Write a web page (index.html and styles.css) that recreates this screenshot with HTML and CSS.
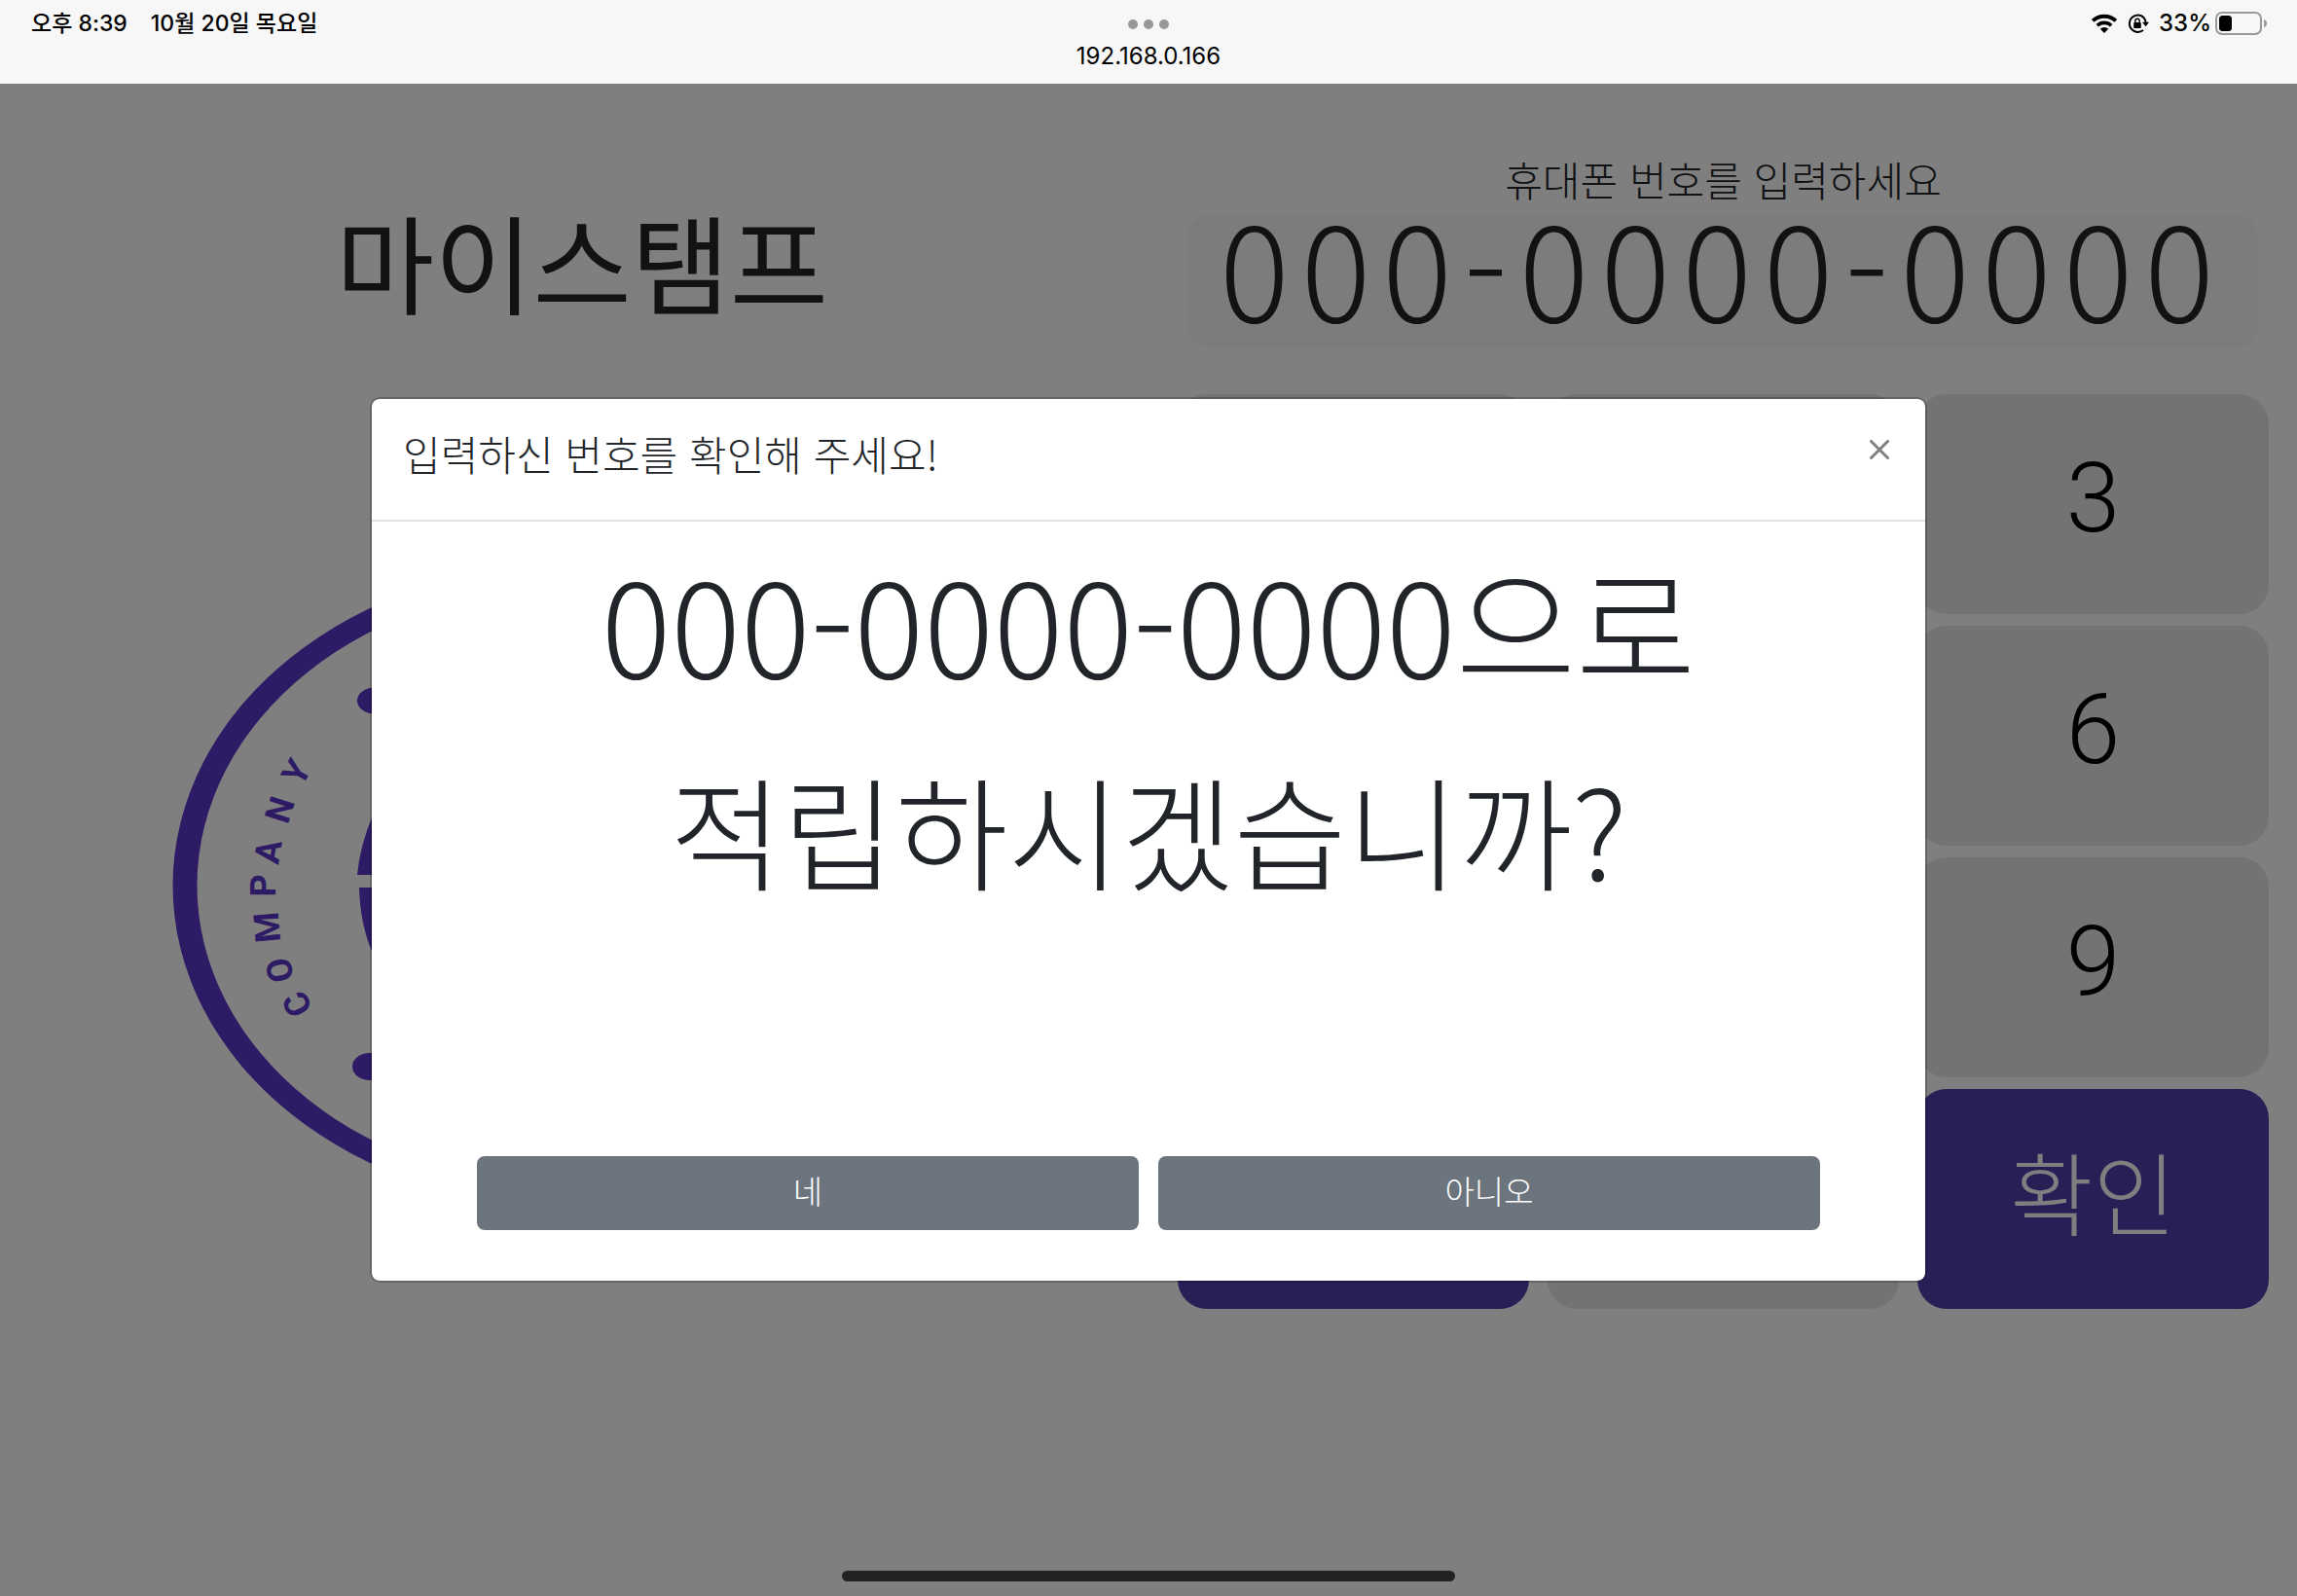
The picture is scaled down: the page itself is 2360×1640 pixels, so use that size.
FILE: index.html
```html
<!DOCTYPE html>
<html lang="ko">
<head>
<meta charset="utf-8">
<meta name="viewport" content="width=device-width, initial-scale=1">
<title>마이스탬프</title>
<link rel="stylesheet" href="styles.css">
</head>
<body>
<header class="status">
  <div class="status-left"><span>오후 8:39</span><span>10월 20일 목요일</span></div>
  <div class="status-center">
    <div class="dots"><i></i><i></i><i></i></div>
    <span class="address">192.168.0.166</span>
  </div>
  <div class="status-right">
    <svg class="wifi" viewBox="0 0 28 20" width="28" height="20" aria-hidden="true">
      <path d="M2.200 7.400A17 17 0 0 1 25.800 7.400" fill="none" stroke="#000" stroke-width="4"/>
      <path d="M6.800 12.200A10.500 10.500 0 0 1 21.200 12.200" fill="none" stroke="#000" stroke-width="3.600"/>
      <path d="M14 20L9.800 15.800A6 6 0 0 1 18.200 15.800Z"/>
    </svg>
    <svg class="lock" viewBox="0 0 22 20" width="22" height="20" aria-hidden="true">
      <path d="M16.800 4.200A8.700 8.700 0 1 0 16 17" fill="none" stroke="#000" stroke-width="2"/>
      <path d="M16 3.500A8.700 8.700 0 0 1 18.600 9.500" fill="none" stroke="#000" stroke-width="2"/>
      <path d="M15 8.800H22L18.500 13.200Z"/>
      <rect x="6.200" y="9" width="7.600" height="6" rx="1"/>
      <path d="M7.800 9.500V7.500A2.200 2.200 0 0 1 12.200 7.500V9.500" fill="none" stroke="#000" stroke-width="1.400"/>
    </svg>
    <span>33%</span>
    <svg class="battery" viewBox="0 0 54 24" width="54" height="24" aria-hidden="true">
      <rect x="1" y="1" width="46" height="22" rx="6" fill="none" stroke="#999" stroke-width="2"/>
      <rect x="4" y="4" width="13" height="16" rx="3.500"/>
      <path d="M50 8Q53 9 53 12T50 16Z" fill="#999"/>
    </svg>
  </div>
</header>

<div class="stage">
  <main class="app">
    <section class="brand">
      <h1 class="brand-name">마이스탬프</h1>
      <svg class="stamp" viewBox="0 0 826 664" width="826" height="664" role="img" aria-label="COMPANY">
        <g transform="translate(-177 -578)" fill="#5a36cc">
          <path fill-rule="evenodd" d="M177.500 910A412.500 331 0 1 1 1002.500 910A412.500 331 0 1 1 177.500 910ZM202.500 910A387.500 310 0 1 0 977.500 910A387.500 310 0 1 0 202.500 910Z"/>
          <ellipse cx="385" cy="720" rx="18" ry="13.500"/>
          <ellipse cx="380" cy="1096" rx="18" ry="14"/>
          <path d="M367 899Q370 868 383 838H400V899Z"/>
          <path d="M369 912Q370 950 383 980H400V912Z"/>
          <g class="stamp-text">
            <text transform="translate(305 1032) rotate(-116)" y="13">C</text>
            <text transform="translate(287 997) rotate(-102)" y="13">O</text>
            <text transform="translate(274 953) rotate(-95)" y="13">M</text>
            <text transform="translate(270 910) rotate(-90)" y="13">P</text>
            <text transform="translate(275 875) rotate(-81)" y="13">A</text>
            <text transform="translate(287 832) rotate(-72)" y="13">N</text>
            <text transform="translate(304 793) rotate(-60)" y="13">Y</text>
          </g>
        </g>
      </svg>
    </section>
    <section class="entry">
      <label class="entry-label" for="phone">휴대폰 번호를 입력하세요</label>
      <input class="entry-field" id="phone" type="text" value="000-0000-0000" readonly>
      <div class="keypad">
        <button class="key" aria-label="1"></button>
        <button class="key" aria-label="2"></button>
        <button class="key">3</button>
        <button class="key" aria-label="4"></button>
        <button class="key" aria-label="5"></button>
        <button class="key">6</button>
        <button class="key" aria-label="7"></button>
        <button class="key" aria-label="8"></button>
        <button class="key">9</button>
        <button class="key key-action" aria-label="취소"></button>
        <button class="key" aria-label="0"></button>
        <button class="key key-action">확인</button>
      </div>
    </section>
  </main>

  <div class="backdrop">
    <div class="modal" role="dialog" aria-labelledby="modal-title">
      <div class="modal-header">
        <h2 class="modal-title" id="modal-title">입력하신 번호를 확인해 주세요!</h2>
        <button class="close" aria-label="닫기">
          <svg viewBox="0 0 20 20" width="20" height="20" aria-hidden="true"><path d="M1.500 1.500L18.500 18.500M18.500 1.500L1.500 18.500" stroke="#7f7f7f" stroke-width="3" stroke-linecap="round"/></svg>
        </button>
      </div>
      <div class="modal-body">
        <p class="number">000-0000-0000으로</p>
        <p class="question">적립하시겠습니까?</p>
        <div class="actions">
          <button class="btn">네</button>
          <button class="btn">아니오</button>
        </div>
      </div>
    </div>
  </div>
  <div class="home-bar"></div>
</div>
</body>
</html>
```
FILE: styles.css
```css
* { box-sizing: border-box; }

body {
  margin: 0;
  min-height: 100vh;
  display: flex;
  flex-direction: column;
  background: #fff;
  color: #212529;
  font-family: "Noto Sans CJK KR", sans-serif;
  font-weight: 300;
}

h1, h2, p { margin: 0; font-weight: inherit; }

button, input {
  border: 0;
  padding: 0;
  margin: 0;
  font-family: inherit;
  font-weight: inherit;
  color: inherit;
}

/* Status bar */
.status {
  display: grid;
  grid-template-columns: 1fr auto 1fr;
  height: 86px;
  padding: 0 32px;
  background: #f7f7f7;
  color: #000;
  font: 500 24px/48px Inter, "Noto Sans CJK KR", sans-serif;
}
.status-left { display: flex; gap: 24px; font-size: 23px; }
.status-center { display: flex; flex-direction: column; align-items: center; }
.dots { display: flex; gap: 6px; padding-top: 20px; }
.dots i { width: 10px; height: 10px; border-radius: 50%; background: #979797; }
.address { font-weight: 400; line-height: 56px; }
.status-right {
  display: flex;
  justify-content: flex-end;
  align-items: center;
  height: 48px;
  gap: 10px;
}
.battery { margin-left: -6px; margin-right: -2px; }

/* Kiosk page */
.stage { position: relative; flex: 1; display: flex; flex-direction: column; }
.app { flex: 1; display: grid; grid-template-columns: repeat(2, minmax(0, 1fr)); }

.brand { display: flex; flex-direction: column; align-items: center; gap: 233px; padding-top: 103px; }
.brand-name { padding-left: 16px; font-size: 110px; line-height: 156px; font-weight: 400; }
.stamp { max-width: 100%; }
.stamp-text {
  font: 700 36px "Liberation Sans Narrow", "Roboto", sans-serif;
  text-anchor: middle;
}

.entry { display: flex; flex-direction: column; padding: 62px 29px 0 30px; }
.entry-label { font-size: 42px; line-height: 72px; text-align: center; }
.entry-field {
  height: 138px;
  margin: 0 11px 47px 10px;
  padding-bottom: 32px;
  border-radius: 24px;
  background: #f8f8f8;
  font-size: 134px;
  letter-spacing: 12px;
  text-align: center;
  min-width: 0;
}
.keypad { display: grid; grid-template-columns: repeat(3, 1fr); grid-auto-rows: 226px; gap: 12px 19px; }
.key {
  padding-bottom: 14px;
  border-radius: 30px;
  background: #e6e6e6;
  color: #000;
  font-family: Roboto, "Noto Sans CJK KR", sans-serif;
  font-size: 100px;
}
.key-action { padding-bottom: 20px; background: #543cae; color: #fff; font-size: 93px; }

/* Confirmation dialog */
.backdrop {
  position: absolute;
  inset: 0;
  display: flex;
  justify-content: center;
  align-items: flex-start;
  padding-top: 322px;
  background: rgba(0, 0, 0, 0.5);
}
.modal {
  width: 90%;
  max-width: 1600px;
  border: 2px solid rgba(0, 0, 0, 0.2);
  border-radius: 10px;
  background: #fff;
  background-clip: padding-box;
}
.modal-header {
  display: flex;
  justify-content: space-between;
  align-items: flex-start;
  padding: 24px 32px 36px;
  border-bottom: 2px solid #dee2e6;
}
.modal-title { font-size: 42px; line-height: 64px; }
.close { display: flex; padding: 18px 5px; background: none; }
.modal-body { padding: 0 108px 52px; text-align: center; }
.number { font-size: 134px; line-height: 206px; }
.question { font-size: 126px; line-height: 218px; }
.actions { display: grid; grid-template-columns: 1fr 1fr; gap: 20px; padding-top: 228px; }
.btn {
  height: 76px;
  padding-bottom: 6px;
  border-radius: 8px;
  background: #6c757d;
  color: #fff;
  font-size: 33px;
}

.home-bar {
  position: absolute;
  bottom: 15px;
  left: 50%;
  width: 630px;
  height: 11px;
  margin-left: -315px;
  border-radius: 6px;
  background: #222;
}
```
